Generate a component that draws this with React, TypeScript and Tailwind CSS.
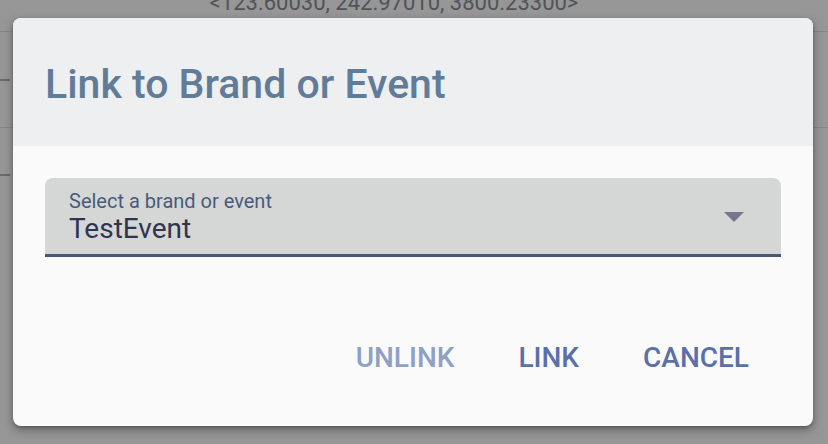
import React from 'react';

const LinkDialog: React.FC = () => {
  return (
    <div className="w-[800px] rounded-[8px] overflow-hidden bg-[#fafafa] shadow-[0_4px_10px_rgba(0,0,0,0.35),0_1px_3px_rgba(0,0,0,0.2)]">
      <div className="h-[128px] bg-[#eeeff1] px-[32px] flex items-center">
        <h2 className="text-[41px] leading-none font-medium text-[#607c98] pt-[4px]">Link to Brand or Event</h2>
      </div>

      <div className="px-[32px] pt-[32px] pb-[34px]">
        <div className="h-[79px] bg-[#d5d7d7] rounded-t-[8px] border-b-[3px] border-[#4a5577] pl-[24px] pr-[37px] flex items-center">
          <div className="flex-1 flex flex-col pt-[4px]">
            <span className="text-[20px] leading-[22px] text-[#4a5a7c]">Select a brand or event</span>
            <span className="text-[28px] leading-[34px] text-[#30354f]">TestEvent</span>
          </div>
          <svg width="20" height="10" viewBox="0 0 20 10" className="mt-[1px]">
            <path d="M0 0 L20 0 L10 10 Z" fill="#76768f" />
          </svg>
        </div>

        <div className="mt-[63px] h-[72px] pr-[16px] pt-[3px] flex justify-end items-center gap-[32px]">
          <button className="px-[16px] h-full text-[28px] font-medium uppercase text-[#8fa0c4]">Unlink</button>
          <button className="px-[16px] h-full text-[28px] font-medium uppercase text-[#5a70a8]">Link</button>
          <button className="px-[16px] h-full text-[28px] font-medium uppercase text-[#5a70a8]">Cancel</button>
        </div>
      </div>
    </div>
  );
};

export default function App() {
  return (
    <div className="relative w-[828px] h-[444px] overflow-hidden bg-[#969696] font-['Roboto',sans-serif]">
      {/* page behind the overlay */}
      <div className="flex flex-col">
        <div className="h-[32px] border-b border-[#858585] flex justify-center">
          <span className="text-[22px] leading-none text-[#50545a] -mt-[8px] pr-[40px]">&lt;123.60030, 242.97010, 3800.23300&gt;</span>
        </div>
        <div className="h-[49px] flex items-end">
          <div className="w-[10px] border-b-2 border-[#6a6a6a]" />
        </div>
        <div className="h-[47px] border-b border-[#858585]" />
        <div className="h-[48px] flex items-end">
          <div className="w-[10px] border-b-2 border-[#6a6a6a]" />
        </div>
      </div>

      <div className="absolute inset-0 pt-[18px] pl-[13px]">
        <LinkDialog />
      </div>
    </div>
  );
}
